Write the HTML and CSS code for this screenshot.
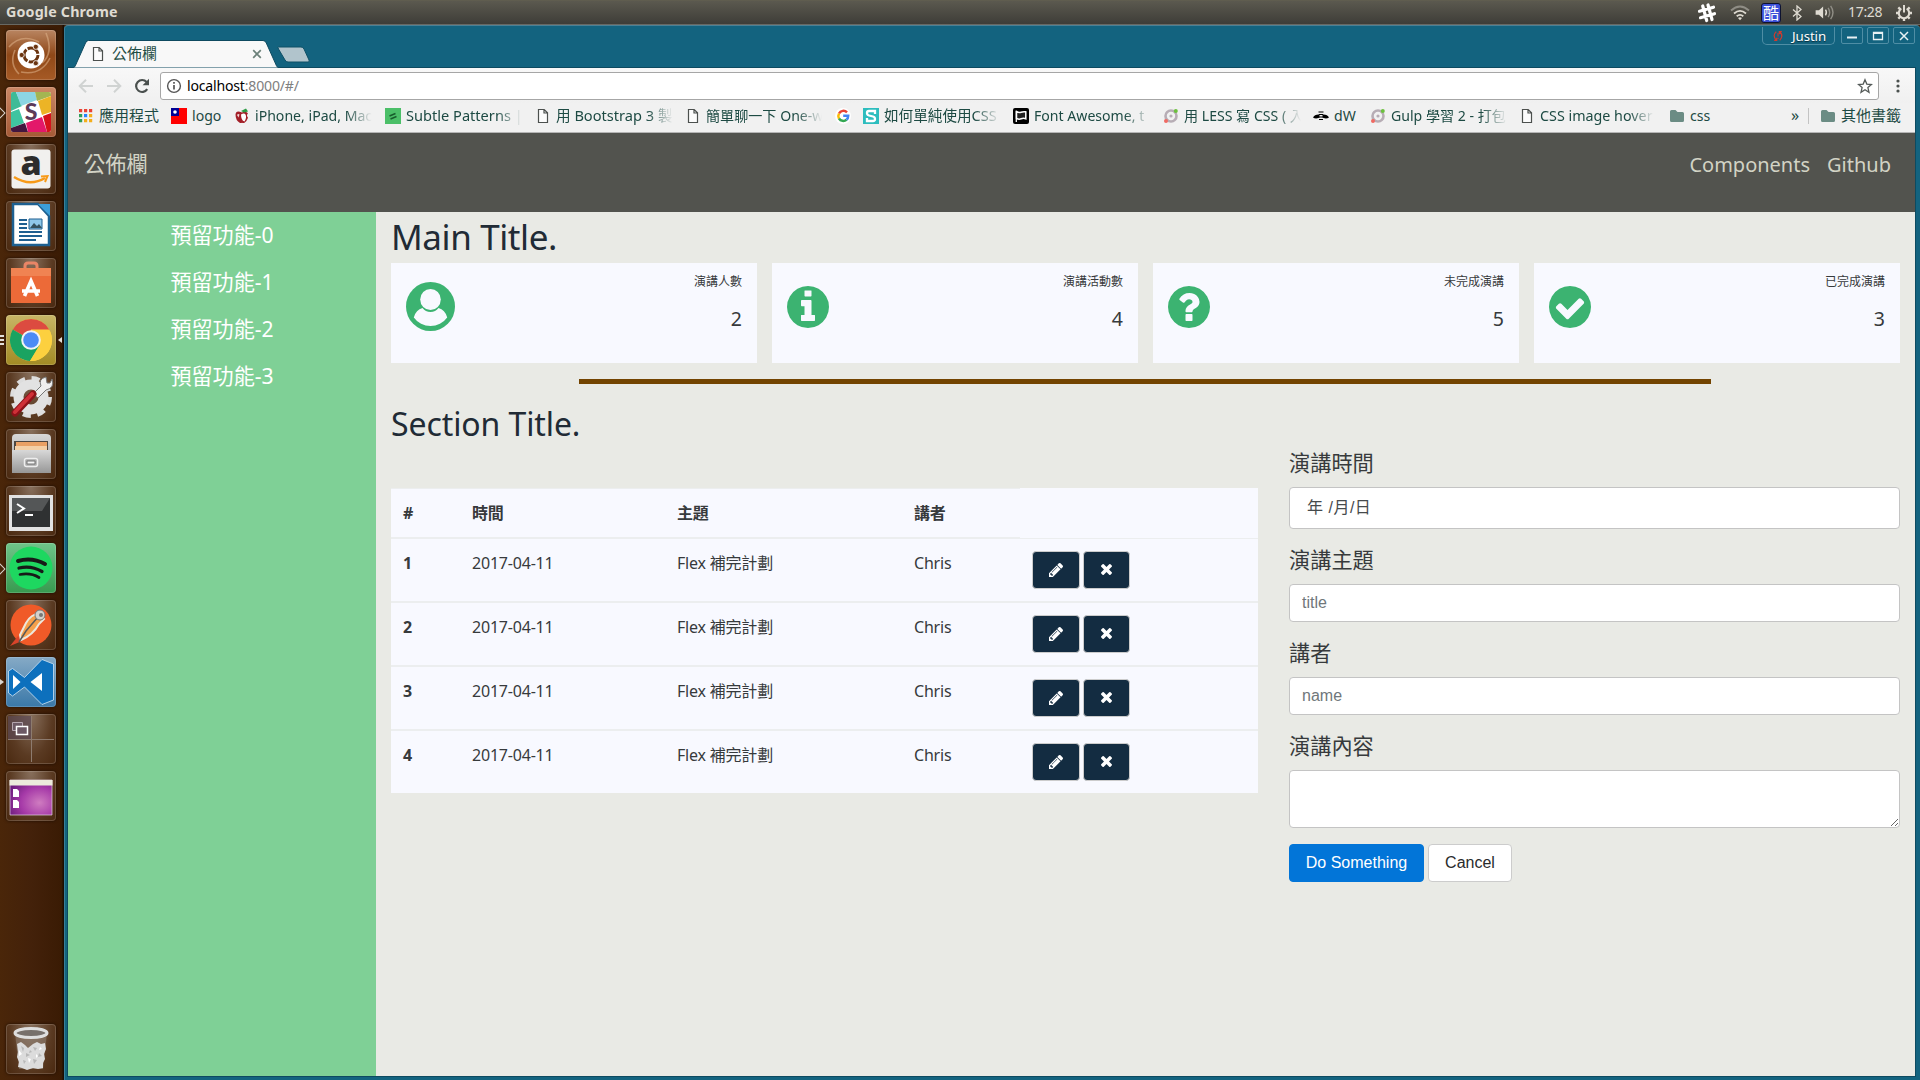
FILE: index.html
```html
<!DOCTYPE html>
<html lang="zh-Hant">
<head>
<meta charset="utf-8">
<title>公佈欄</title>
<link rel="stylesheet" href="styles.css">
</head>
<body>
<svg class="defs" aria-hidden="true">
  <defs>
    <linearGradient id="metal" x1="0" y1="0" x2="0" y2="1"><stop offset="0" stop-color="#d8d8d8"/><stop offset="1" stop-color="#979797"/></linearGradient>
    <radialGradient id="purple" cx=".7" cy=".65" r=".8"><stop offset="0" stop-color="#cf7cc0"/><stop offset=".55" stop-color="#a63aa8"/><stop offset="1" stop-color="#6a1c7c"/></radialGradient>
    <symbol id="page" viewBox="0 0 12 16"><path d="M1.500 1.500h5.700l3.300 3.300v9.700h-9z M7 1.500v3.500h3.500" fill="#fcfcfc" stroke="#4c504e" stroke-width="1.200"/></symbol>
    <symbol id="folder" viewBox="0 0 16 14"><path d="M1 2.500q0-1.500 1.500-1.500h4l2 2h5q1.500 0 1.500 1.500v7q0 1.500-1.500 1.500h-11q-1.500 0-1.500-1.500z" fill="#6b8c84"/></symbol>
    <symbol id="ring" viewBox="0 0 16 16"><circle cx="8" cy="8" r="5.500" fill="none" stroke="#b7adb5" stroke-width="2.600"/><circle cx="8" cy="8" r="1.600" fill="#b7adb5"/><circle cx="12.800" cy="3" r="2" fill="#6cc03e"/><circle cx="3" cy="13" r="2" fill="#ef6a63"/></symbol>
    <symbol id="pencil" viewBox="128 149 1515 1515"><path fill="#fff" d="M491 1536l91-91-235-235-91 91v107h128v128h107zm523-928q0-22-22-22-10 0-17 7l-542 542q-7 7-7 17 0 22 22 22 10 0 17-7l542-542q7-7 7-17zm-54-192l416 416-832 832h-416v-416zm683 96q0 53-37 90l-166 166-416-416 166-165q36-38 90-38 53 0 91 38l235 234q37 39 37 91z"/></symbol>
    <symbol id="times" viewBox="302 366 1188 1188"><path fill="#fff" d="M1490 1322q0 40-28 68l-136 136q-28 28-68 28t-68-28l-294-294-294 294q-28 28-68 28t-68-28l-136-136q-28-28-28-68t28-68l294-294-294-294q-28-28-28-68t28-68l136-136q28-28 68-28t68 28l294 294 294-294q28-28 68-28t68 28l136 136q28 28 28 68t-28 68l-294 294 294 294q28 28 28 68z"/></symbol>
  </defs>
</svg>

<header class="panel">
  <span class="panel-title">Google Chrome</span>
  <div class="tray">
    <svg class="t-slack" viewBox="0 0 20 20"><g stroke="#fff" stroke-width="3.200" stroke-linecap="round"><path d="M5.700 3l4 14.500M11 2l4 14.500M2.500 8.200l14-4M3.500 14.700l14-4"/></g></svg>
    <svg class="t-wifi" viewBox="0 0 20 16"><g fill="none" stroke-width="1.800"><path d="M1 5.500q9-8 18 0" stroke="#8f8d85"/><path d="M4 8.500q6-5.200 12 0M6.700 11.300q3.300-2.800 6.600 0" stroke="#dfdbd2"/></g><path d="M8 13q2-1.500 4 0l-2 2.200z" fill="#dfdbd2"/></svg>
    <span class="t-ime">酷</span>
    <svg class="t-bt" viewBox="0 0 10 16"><path d="M1 4.500l8 7-4 3.500v-14l4 3.500-8 7" fill="none" stroke="#dfdbd2" stroke-width="1.300"/></svg>
    <svg class="t-vol" viewBox="0 0 20 16"><path d="M0 5.500h3.500l4.500-4v13l-4.500-4h-3.500z" fill="#dfdbd2"/><path d="M10.500 5q2 3 0 6" fill="none" stroke="#dfdbd2" stroke-width="1.500"/><path d="M13.300 3q3.400 5 0 10M16 1q5 7 0 14" fill="none" stroke="#908e86" stroke-width="1.500"/></svg>
    <span class="t-clock">17:28</span>
    <svg class="t-gear" viewBox="0 0 18 18"><g stroke="#dfdbd2" stroke-width="2.400"><path d="M1 9h3M14 9h3M9 14v3M3.300 3.300l2.200 2.200M14.700 3.300l-2.200 2.200M3.300 14.700l2.200-2.200M14.700 14.700l-2.200-2.200"/></g><path d="M6.300 4.600a5.200 5.200 0 1 0 5.400 0" fill="none" stroke="#dfdbd2" stroke-width="2.100"/><path d="M9 1v7.500" stroke="#dfdbd2" stroke-width="2"/></svg>
  </div>
</header>

<div class="desktop">
<nav class="launcher">
  <div class="tile dash"><svg viewBox="0 0 50 50"><g fill="none" stroke="#e0b48c" stroke-opacity=".55" stroke-width="1.600"><path d="M3 17q12-14 30-5M40 3q8 20-4 30M13 44q-10-10-4-24M15 42q20 4 29-14"/></g><circle cx="25" cy="25" r="13.500" fill="#fff"/><circle cx="25" cy="25" r="7" fill="none" stroke="#6b3410" stroke-width="3" stroke-dasharray="13.200 1.460"/><g fill="#6b3410" stroke="#fff" stroke-width=".8"><circle cx="15.700" cy="25" r="2.600"/><circle cx="29.800" cy="16.800" r="2.600"/><circle cx="29.800" cy="33.200" r="2.600"/></g></svg></div>
  <div class="tile slack mark-open"><svg viewBox="0 0 50 50"><clipPath id="sc"><rect x="5" y="5" width="40" height="40" rx="2"/></clipPath><g clip-path="url(#sc)"><path fill="#fff" d="M5 5h40v40h-40z"/><path fill="#3ebb97" d="M5 5h5l6 14-11 5z"/><path fill="#8cd5e3" d="M10 5h19l2 8-16 6z"/><path fill="#a3b552" d="M29 5h16v4l-14 5z"/><path fill="#ecb426" d="M32 14l13-5v16l-9 3z"/><path fill="#3fc4a0" d="M5 25l8-3 5 14-13 5z"/><path fill="#43163f" d="M5 41l14-5 3 9h-17z"/><path fill="#e3186a" d="M20 36l16-6 5 15h-19z"/><path fill="#d5121b" d="M37 29l8-3v19h-4z"/></g><text x="25" y="33" class="g-slack">S</text></svg></div>
  <div class="tile"><svg viewBox="0 0 50 50"><rect x="5.500" y="5.500" width="39" height="39" rx="3" fill="#f1f0ee"/><text x="25" y="31" class="g-amz">a</text><path d="M8 33q16 10 31 1" fill="none" stroke="#f79a18" stroke-width="2.500"/><path d="M35 32.500l6.500-.5-2.500 6" fill="none" stroke="#f79a18" stroke-width="2"/></svg></div>
  <div class="tile"><svg viewBox="0 0 50 50"><path d="M7 3h25l11 12v29h-36z" fill="#fff" stroke="#1d6091" stroke-width="2.500"/><path d="M32 3h12v12z" fill="#3c9ed8"/><g stroke="#1f5f90" stroke-width="2"><path d="M13 19h8M13 23h8M13 27h8M13 31h23M13 35h23M13 39h17"/></g><path d="M23 18h13v10h-13z" fill="#8fc8ea" stroke="#1f5f90"/><path d="M24 27l4-5 3 3 2-2 3 4z" fill="#35515d"/></svg></div>
  <div class="tile"><svg viewBox="0 0 50 50"><path d="M19 15v-7q0-3 3-3h6q3 0 3 3v7" fill="none" stroke="#e98566" stroke-width="3"/><path d="M5 10h40v35h-40z" fill="#ec6a38"/><path d="M5 10h40v8h-40z" fill="#f08352"/><path d="M18.500 38l6.500-15 6.500 15M16 33h18" fill="none" stroke="#fff" stroke-width="3.600"/></svg></div>
  <div class="tile chrome mark-many"><svg viewBox="0 0 50 50"><circle cx="25" cy="25" r="21" fill="#fcd03f"/><path d="M25 25L6.800 14.500A21 21 0 0 1 43.200 14.500H25z" fill="#dc4b40"/><path d="M6.800 14.500A21 21 0 0 0 24 46l10-16-9-5z" fill="#1aa361"/><path d="M25 15.500H43.700A21 21 0 0 1 24 46l9.500-16z" fill="#fcd03f"/><circle cx="25" cy="25" r="9.800" fill="#f3f3f3"/><circle cx="25" cy="25" r="7.800" fill="#4c8bf5"/></svg></div>
  <div class="tile"><svg viewBox="0 0 50 50"><circle cx="25" cy="25" r="18.500" fill="none" stroke="#ddd" stroke-width="5" stroke-dasharray="8 6.530"/><circle cx="25" cy="25" r="12.500" fill="none" stroke="#e2e2e2" stroke-width="10"/><path d="M27 22l8-8q-3-7 5-9l1 6 3 0 2-4q3 9-6 11l-8 8z" fill="#eee" stroke="#777"/><path d="M9 41L27 22" stroke="#8d1219" stroke-width="7" stroke-linecap="round"/><path d="M9 40L26 22" stroke="#cf3038" stroke-width="4" stroke-linecap="round"/></svg></div>
  <div class="tile"><svg viewBox="0 0 50 50"><path d="M6 9q0-4 4-4h30q5 0 5 4v35h-39z" fill="url(#metal)"/><path d="M8 12h34v9h-34z" fill="#4d4640"/><path d="M10 13h31v8h-31z" fill="#e9a064"/><path d="M9 17h32v4h-32z" fill="#f3cfa6"/><path d="M6 21h39v23h-39z" fill="url(#metal)"/><rect x="18.500" y="29.500" width="13" height="8" rx="2" fill="#aaa" stroke="#eee" stroke-width="1.500"/><path d="M21 32h8v3h-8z" fill="#f5f5f5" stroke="#777"/></svg></div>
  <div class="tile"><svg viewBox="0 0 50 50"><path d="M3 9h44v36h-44z" fill="#e2e2e2"/><path d="M6 12h38v29h-38z" fill="#2f3132"/><path d="M6 12h38l-8 13h-30z" fill="#545657"/><path d="M11 18l7 4.500-7 4.500M19 29h8" fill="none" stroke="#fff" stroke-width="2"/></svg></div>
  <div class="tile spotify mark-open"><svg viewBox="0 0 50 50"><circle cx="25" cy="25" r="21.500" fill="#1ed760"/><g fill="none" stroke="#171a18" stroke-linecap="round"><path d="M12 18q14-4 27 3" stroke-width="4"/><path d="M13 25q12-3 23 3.500" stroke-width="3.300"/><path d="M14 31.500q11-2 19 3" stroke-width="2.700"/></g></svg></div>
  <div class="tile"><svg viewBox="0 0 50 50"><circle cx="25" cy="25" r="20.500" fill="#f05a28"/><path d="M4 46l8-10 4 5z" fill="#d9442a"/><path d="M33 14q-8 0-13 9l-6 12 1 5q12-5 18-16l5-5z" fill="#f5a04b" stroke="#ece7dc" stroke-width="2"/><path d="M32 17l-12 14-7 11" stroke="#5a5a5a" stroke-width="1.500" fill="none"/><circle cx="34" cy="15" r="5" fill="#d4d0cb" stroke="#777"/><circle cx="35" cy="15" r="2" fill="#777"/></svg></div>
  <div class="tile code mark-solid"><svg viewBox="0 0 50 50"><path d="M2.500 14l4-2.500 12 9L36 2.500l11.500 4.500v36L36 47.500 18.500 30l-12 9-4-3z" fill="#0d70bd" stroke="#cfe5f5" stroke-width=".8"/><path d="M7 18l7.500 7-7.500 7zM36 16v18L24.500 25z" fill="#fff"/></svg></div>
  <div class="tile"><svg viewBox="0 0 50 50"><path d="M2 2h23v23h-23z" fill="#5d4a55" fill-opacity=".7"/><path d="M25.500 2v46M2 25.500h46" stroke="#8d7b6f" stroke-width="1"/><path d="M6.500 8.500h10v8h-10z" fill="#6c5965" stroke="#b5a6af"/><path d="M10.500 12.500h11v8h-11z" fill="#6c5965" stroke="#fff" stroke-width="1.500"/></svg></div>
  <div class="tile"><svg viewBox="0 0 50 50"><path d="M4 9h42v35h-42z" fill="url(#purple)" stroke="#e5d3e4" stroke-width=".7"/><path d="M3.500 9h43v5.500h-43z" fill="#ecebdc"/><path d="M7 18h4l2 2v6h-6zM7 29h4l2 2v6h-6z" fill="#fff"/></svg></div>
  <div class="tile trash"><svg viewBox="0 0 50 50"><path d="M9 9h32l-4 36h-24z" fill="#9b9188" fill-opacity=".45"/><path d="M11 20l4-2 4 3 3 3 5-4 4-2 4 2 4-1 1 6-2 5 1 5-2 4v5l-5 1-5-1-6 2-5-2-4-1 1-5-2-5 1-5z" fill="#dcdcdc"/><path d="M15 22l3 2-1 4zM27 23l4 1-2 3zM20 29l4 2-4 2zM33 29l3 3-4 1zM17 36l3 1-2 3zM27 35l4 1-3 4zM24 26l2 2-3 1z" fill="#b8b8b8"/><path d="M13 26l3 4-3 2zM22 34l3 1-2 4zM30 30l2 2-2 2zM34 23l2 2-3 1z" fill="#fff"/><ellipse cx="25" cy="9" rx="16" ry="4.500" fill="#77706b" stroke="#dedede" stroke-width="3"/></svg></div>
</nav>

<main class="window">
  <div class="frame-top">
    <svg class="tab-shape" viewBox="0 0 245 28"><path d="M0 28q1.500-.5 2.300-2.200L12.500 3q1-2.500 3-2.500H190q2.300 0 3.300 2.500l10.200 22.800q.8 1.700 2.500 2.200z" fill="#f8f8f8" stroke="#0e4a60"/><path d="M205.500 7h22.500q2 0 3 2l5 11q1 2-1 2h-20q-2 0-3-2l-6.500-11q-1-2 0-2z" fill="#b1c4cc" stroke="#0f5066"/></svg>
    <div class="tab"><svg class="i-page"><use href="#page"/></svg><span class="tab-title">公佈欄</span><svg class="tab-close" viewBox="0 0 10 10"><path d="M1.200 1.200l7.600 7.600M8.800 1.200l-7.600 7.600" stroke="#6b8079" stroke-width="1.700"/></svg></div>
    <div class="win-ctl">
      <div class="user"><svg viewBox="0 0 14 14"><path d="M5 2q-5 4 0 10M2.500 12h3v-3M9 2q5 5 0 10M11.500 2h-3v3" fill="none" stroke="#d23a2e" stroke-width="1.400"/><path d="M7 3.500v4M7 9v1.500" stroke="#d23a2e" stroke-width="1.200"/></svg><span>Justin</span></div>
      <div class="wb"><svg viewBox="0 0 12 12"><path d="M1 7.500h10" stroke="#e8f1f4" stroke-width="2"/></svg></div>
      <div class="wb"><svg viewBox="0 0 12 12"><path d="M1.500 2.500h9v7h-9z" fill="none" stroke="#e8f1f4" stroke-width="1.300"/><path d="M1 3h10" stroke="#e8f1f4" stroke-width="2"/></svg></div>
      <div class="wb"><svg viewBox="0 0 12 12"><path d="M2 2l8 8M10 2l-8 8" stroke="#e8f1f4" stroke-width="1.500"/></svg></div>
    </div>
  </div>
  <div class="client">
  <div class="toolbar">
    <svg class="nav-i" viewBox="0 0 16 16"><path d="M15 8h-13M8 1.700l-6.300 6.300 6.300 6.300" fill="none" stroke="#d0d3d2" stroke-width="2"/></svg>
    <svg class="nav-i" viewBox="0 0 16 16"><path d="M1 8h13M8 1.700l6.300 6.300-6.300 6.300" fill="none" stroke="#d0d3d2" stroke-width="2"/></svg>
    <svg class="nav-i" viewBox="0 0 16 16"><path d="M13.200 11.200a6 6 0 1 1-.6-7.200" fill="none" stroke="#4a504e" stroke-width="2.200"/><path d="M15 .8v6.400h-6.400z" fill="#4a504e"/></svg>
    <div class="omnibox">
      <svg class="i-info" viewBox="0 0 16 16"><circle cx="8" cy="8" r="6.400" fill="none" stroke="#555" stroke-width="1.400"/><path d="M8 7v4.500M8 4v1.800" stroke="#555" stroke-width="1.700"/></svg>
      <span class="url"><b>localhost</b>:8000/#/</span>
      <svg class="i-star" viewBox="0 0 16 16"><path d="M8 1.700l1.800 4.400 4.700.4-3.600 3.100 1.100 4.700-4-2.500-4 2.500 1.100-4.700-3.600-3.100 4.700-.4z" fill="none" stroke="#555b59" stroke-width="1.300"/></svg>
    </div>
    <svg class="i-dots" viewBox="0 0 4 14"><g fill="#4a504e"><circle cx="2" cy="2" r="1.600"/><circle cx="2" cy="7" r="1.600"/><circle cx="2" cy="12" r="1.600"/></g></svg>
  </div>
  <div class="bookmarks">
    <div class="bm b1"><svg viewBox="0 0 16 16"><path fill="#ea4335" d="M1 1h3.200v3.200h-3.200zM6 1h3.200v3.200h-3.200zM11 1h3.200v3.200h-3.200z"/><path fill="#2f9e58" d="M1 6h3.200v3.200h-3.200zM1 11h3.200v3.200h-3.200z"/><path fill="#2684fc" d="M6 6h3.200v3.200h-3.200z"/><path fill="#f4ae1a" d="M11 6h3.200v3.200h-3.200zM11 11h3.200v3.200h-3.200zM6 11h3.200v3.200h-3.200z"/></svg><span>應用程式</span></div>
    <div class="bm b2"><svg viewBox="0 0 16 16"><path fill="#f00" d="M0 0h16v16h-16z"/><path fill="#000095" d="M0 0h8v8h-8z"/><circle cx="4" cy="4" r="1.800" fill="#fff"/></svg><span>logo</span></div>
    <div class="bm b3"><svg viewBox="0 0 16 16"><path d="M8 4.500q-6-3-6.500 2 0 6 4.500 8.500 1 .3 2-.3 1.500.6 2.500 0 2.500-2 3.500-5-2-2.500 0-4.500-3-2.500-6-.7z" fill="#a31f28"/><path d="M7 6.500q3-2 4.500 0 1.500 3-1 7-3.500-1-3.500-7z" fill="#fff"/><path d="M3 7q1-1.500 2.500-.5l-1 3z" fill="#f3d6d6"/><path d="M7 3l5-2.500 2 3-4 1z" fill="#2d9b45"/></svg><span class="fade">iPhone, iPad, Mac</span></div>
    <div class="bm b4"><svg viewBox="0 0 16 16"><path fill="#4bbf68" d="M0 0h16v16h-16z"/><path d="M4.500 8l6-2.500M5.500 11l6-2.500" stroke="#175c2c" stroke-width="1.500"/></svg><span class="fade">Subtle Patterns |</span></div>
    <div class="bm b5"><svg class="doc"><use href="#page"/></svg><span class="fade">用 Bootstrap 3 製</span></div>
    <div class="bm b6"><svg class="doc"><use href="#page"/></svg><span class="fade">簡單聊一下 One-w</span></div>
    <div class="bm b7"><svg viewBox="0 0 16 16"><circle cx="8" cy="8" r="8" fill="#fff"/><g fill="none" stroke-width="2.500"><path d="M12 4.300a5 5 0 0 0-8 1.200" stroke="#ea4335"/><path d="M4 5.500a5 5 0 0 0 0 5" stroke="#fbbc05"/><path d="M4 10.500a5 5 0 0 0 7.500 1.200" stroke="#34a853"/><path d="M11.500 11.700q1.700-1.500 1.700-4h-5" stroke="#4285f4"/></g></svg></div>
    <div class="bm b8"><svg viewBox="0 0 16 16"><path fill="#2dbdbe" d="M0 0h16v16h-16z"/><path d="M12 6v-3h-6q-2 0-2 2t2 2.500l4 1q2 .5 2 2.500t-2 2h-6v-3" fill="none" stroke="#fff" stroke-width="2.300"/></svg><span class="fade">如何單純使用CSS</span></div>
    <div class="bm b9"><svg viewBox="0 0 16 16"><rect width="16" height="16" rx="2"/><path d="M3.500 3.500q2.500 1.500 4.500.7t4.800-.4v7q-2.300-1-4.600 0t-4.700-.4z" fill="#222" stroke="#fff" stroke-width="1.500"/><path d="M3.300 3v11" stroke="#fff" stroke-width="1.300"/></svg><span class="fade">Font Awesome, t</span></div>
    <div class="bm b10"><svg><use href="#ring"/></svg><span class="fade">用 LESS 寫 CSS ( 入</span></div>
    <div class="bm b11"><svg viewBox="0 0 16 16"><path d="M0 9.500q1.500-3 5.500-3l1-.5v3.500l-1 .5q-3 1.200-5.500-.5zM16 9.500q-1.500-3-5.500-3l-1-.5v3.500l1 .5q3 1.200 5.500-.5z"/><path d="M5.500 4h5M6 6.500h4M6 9h4M6 11.500h4" stroke="#000" stroke-width="1.200"/></svg><span>dW</span></div>
    <div class="bm b12"><svg><use href="#ring"/></svg><span class="fade">Gulp 學習 2 - 打包</span></div>
    <div class="bm b13"><svg class="doc"><use href="#page"/></svg><span class="fade">CSS image hover</span></div>
    <div class="bm b14"><svg><use href="#folder"/></svg><span>css</span></div>
    <div class="bm b15"><span>»</span></div>
    <div class="bm b16"><svg><use href="#folder"/></svg><span>其他書籤</span></div>
  </div>

  <div class="app-head"><a class="brand">公佈欄</a><nav><a>Components</a><a>Github</a></nav></div>
  <div class="app">
    <aside class="side"><a>預留功能-0</a><a>預留功能-1</a><a>預留功能-2</a><a>預留功能-3</a></aside>
    <section class="content">
      <h1>Main Title.</h1>
      <div class="cards">
        <div class="card"><svg class="big" viewBox="0 0 49 49"><circle cx="24.500" cy="24.500" r="24.500" fill="#3cb371"/><path d="M16.500 26q-6.500 1.500-8.700 9.500a20.500 20.500 0 0 0 33.400 0q-2.200-8-8.700-9.500-3 4-8 4t-8-4z" fill="#f8f9ff"/><ellipse cx="24.500" cy="17.500" rx="10.300" ry="10.500" fill="#f8f9ff"/></svg><div><h6>演講人數</h6><p>2</p></div></div>
        <div class="card"><svg viewBox="128 128 1536 1536"><path fill="#3cb371" d="M1152 1376v-160q0-14-9-23t-23-9h-96v-512q0-14-9-23t-23-9h-320q-14 0-23 9t-9 23v160q0 14 9 23t23 9h96v320h-96q-14 0-23 9t-9 23v160q0 14 9 23t23 9h448q14 0 23-9t9-23zm-128-896v-160q0-14-9-23t-23-9h-192q-14 0-23 9t-9 23v160q0 14 9 23t23 9h192q14 0 23-9t9-23zm640 416q0 209-103 385.500t-279.500 279.500-385.500 103-385.500-103-279.500-279.500-103-385.500 103-385.500 279.500-279.500 385.500-103 385.500 103 279.500 279.500 103 385.500z"/></svg><div><h6>演講活動數</h6><p>4</p></div></div>
        <div class="card"><svg viewBox="128 128 1536 1536"><path fill="#3cb371" d="M1024 1376v-192q0-14-9-23t-23-9h-192q-14 0-23 9t-9 23v192q0 14 9 23t23 9h192q14 0 23-9t9-23zm256-672q0-88-55.500-163t-138.500-116-170-41q-243 0-371 213-15 24 8 42l132 100q7 6 19 6 16 0 25-12 53-68 86-92 34-24 86-24 48 0 85.500 26t37.500 59q0 38-20 61t-68 45q-63 28-115.500 86.500t-52.500 125.500v36q0 14 9 23t23 9h192q14 0 23-9t9-23q0-19 21.500-49.500t54.500-49.500q32-18 49-28.500t46-35 44.500-48 28-60.500 12.500-81zm384 192q0 209-103 385.500t-279.500 279.500-385.500 103-385.500-103-279.500-279.500-103-385.500 103-385.500 279.500-279.500 385.500-103 385.500 103 279.500 279.500 103 385.500z"/></svg><div><h6>未完成演講</h6><p>5</p></div></div>
        <div class="card"><svg viewBox="128 128 1536 1536"><path fill="#3cb371" d="M1412 734q0-28-18-46l-91-90q-19-19-45-19t-45 19l-408 407-226-226q-19-19-45-19t-45 19l-91 90q-18 18-18 46 0 27 18 45l362 362q19 19 45 19 27 0 46-19l543-543q18-18 18-45zm252 162q0 209-103 385.500t-279.500 279.500-385.500 103-385.500-103-279.500-279.500-103-385.500 103-385.500 279.500-279.500 385.500-103 385.500 103 279.500 279.500 103 385.500z"/></svg><div><h6>已完成演講</h6><p>3</p></div></div>
      </div>
      <hr>
      <h2>Section Title.</h2>
      <div class="cols">
        <table>
          <colgroup><col class="c1"><col class="c2"><col class="c3"><col class="c4"><col class="c5"></colgroup>
          <thead><tr><th>#</th><th>時間</th><th>主題</th><th>講者</th><td></td></tr></thead>
          <tbody>
            <tr><th>1</th><td>2017-04-11</td><td>Flex 補完計劃</td><td>Chris</td><td><div class="acts"><button><svg class="ip"><use href="#pencil"/></svg></button><button><svg class="ix"><use href="#times"/></svg></button></div></td></tr>
            <tr><th>2</th><td>2017-04-11</td><td>Flex 補完計劃</td><td>Chris</td><td><div class="acts"><button><svg class="ip"><use href="#pencil"/></svg></button><button><svg class="ix"><use href="#times"/></svg></button></div></td></tr>
            <tr><th>3</th><td>2017-04-11</td><td>Flex 補完計劃</td><td>Chris</td><td><div class="acts"><button><svg class="ip"><use href="#pencil"/></svg></button><button><svg class="ix"><use href="#times"/></svg></button></div></td></tr>
            <tr><th>4</th><td>2017-04-11</td><td>Flex 補完計劃</td><td>Chris</td><td><div class="acts"><button><svg class="ip"><use href="#pencil"/></svg></button><button><svg class="ix"><use href="#times"/></svg></button></div></td></tr>
          </tbody>
        </table>
        <form>
          <label>演講時間</label><div class="field date">年 /月/日</div>
          <label>演講主題</label><input class="field" placeholder="title">
          <label>講者</label><input class="field" placeholder="name">
          <label>演講內容</label><textarea class="field"></textarea>
          <div class="btns"><button type="button" class="go">Do Something</button><button type="button" class="cancel">Cancel</button></div>
        </form>
      </div>
    </section>
  </div>
  </div>
</main>
</div>
</body>
</html>
```
FILE: styles.css
```css
* { box-sizing: border-box; }
html, body { margin: 0; height: 1080px; overflow: hidden; }
body {
  display: flex; flex-direction: column; width: 1920px;
  font-family: "Noto Sans", "Noto Sans CJK TC", sans-serif;
  background: #411f05; color: #373a3c;
}
svg { display: block; flex: none; }
.defs { position: absolute; width: 0; height: 0; }

/* desktop panel */
.panel {
  height: 25px; flex: none; display: flex; align-items: center; justify-content: space-between;
  padding: 0 7px 0 6px; background: linear-gradient(#64614f 0, #5b594f 1px, #3e3d38 24px, #686863 24px);
  color: #dfdbd2; font-size: 15px;
}
.panel-title { font-weight: 700; font-size: 14.300px; line-height: 22px; letter-spacing: .15px; height: 24px; }
.tray { display: flex; align-items: center; height: 24px; }
.t-slack { width: 20px; height: 20px; margin-right: 13px; }
.t-wifi { width: 20px; height: 16px; margin-right: 11px; }
.t-ime { width: 20px; height: 20px; margin-right: 11px; background: #3b50d8; border: 1px solid #0d1230; border-radius: 3px; color: #fff; font-size: 16px; line-height: 16px; text-align: center; font-family: "Noto Sans CJK TC", sans-serif; }
.t-bt { width: 10px; height: 16px; margin-right: 13px; }
.t-vol { width: 20px; height: 15px; margin-right: 13px; }
.t-clock { font-size: 14px; line-height: 22px; height: 24px; width: 36px; letter-spacing: -.3px; margin-right: 11px; }
.t-gear { width: 18px; height: 18px; }

.desktop { flex: 1; display: flex; min-height: 0; }

/* launcher */
.launcher { width: 64px; flex: none; display: flex; flex-direction: column; gap: 7px; padding: 5px 0 6px 6px; background: linear-gradient(90deg, #4a2609, #43210a 50%, #3a1b04 96%, #120a03); }
.tile { position: relative; width: 50px; height: 50px; border-radius: 4px; background: radial-gradient(ellipse at 50% 0, #88705d, #5a3a22 60%, #49280f); box-shadow: inset 0 0 0 1px rgba(255,255,255,.16), 0 0 3px #1d0d02; }
.tile svg { width: 50px; height: 50px; }
.dash { background: linear-gradient(#b98561, #8f4818 50%, #a65a25); }
.slack { background: linear-gradient(#cb8765, #a55a36); }
.chrome { background: linear-gradient(#c8b566, #a38b24); }
.spotify { background: linear-gradient(#6fc489, #38994f); }
.code { background: linear-gradient(#86aac6, #3a78a8); }
.trash { margin-top: auto; }
.g-slack { font: 900 23px "Lato", sans-serif; fill: #5c3a58; text-anchor: middle; }
.g-amz { font: 800 34px "Open Sans", sans-serif; fill: #2c2c2c; text-anchor: middle; }
.mark-open::before { content: ""; position: absolute; left: -10px; top: 22px; width: 6px; height: 6px; border: 1px solid #d9d4cf; transform: rotate(45deg); }
.mark-solid::before { content: ""; position: absolute; left: -6px; top: 22px; border: 3px solid transparent; border-left: 4px solid #d9d4cf; }
.mark-many::before { content: ""; position: absolute; left: -6px; top: 20px; width: 4px; height: 10px; background: repeating-linear-gradient(#e5e1dc 0 2px, transparent 2px 4px); }
.mark-many::after { content: ""; position: absolute; left: 52px; top: 22px; border: 3px solid transparent; border-right: 4px solid #e5e1dc; border-left: 0; }

/* browser window */
.window { flex: 1; min-width: 0; display: flex; flex-direction: column; padding: 0 5px 4px 3px; background: #13637f; border-top: 1px solid #4b8196; border-left: 1px solid #3a7f99; border-radius: 4px 4px 0 0; }
.frame-top { height: 42px; flex: none; position: relative; display: flex; justify-content: space-between; }
.tab-shape { position: absolute; left: 5px; top: 14px; width: 245px; height: 28px; z-index: 0; }
.tab { position: relative; display: flex; align-items: center; height: 28px; margin-top: 14px; padding-left: 24px; width: 210px; }
.i-page { width: 12px; height: 16px; }
.tab-title { font-size: 15px; line-height: 24px; padding-bottom: 3px; color: #1f4d45; margin-left: 8px; width: 140px; }
.tab-close { width: 10px; height: 10px; }
.win-ctl { display: flex; gap: 4px; padding-top: 1px; }
.user { display: flex; align-items: center; gap: 7px; width: 73px; height: 18px; margin-right: 2px; padding-left: 8px; border: 1px solid #4f8ea5; border-top: 0; border-radius: 0 0 5px 5px; color: #fff; font-size: 13.300px; letter-spacing: -.1px; text-shadow: 0 1px 1px #062c3a; }
.user svg { width: 14px; height: 12px; }
.wb { width: 22px; height: 17px; border: 1px solid #4f8ea5; border-radius: 2px; display: flex; align-items: center; justify-content: center; }
.wb svg { width: 12px; height: 12px; }

.client { flex: 1; min-height: 0; display: flex; flex-direction: column; background: #f1f1f1; box-shadow: 0 0 0 1px #0d4a60; }
.toolbar { height: 35px; flex: none; display: flex; align-items: center; padding: 1px 15px 0 10px; background: linear-gradient(#f8f8f8, #f0f0f0); }
.nav-i { width: 16px; height: 16px; margin-right: 12px; }
.omnibox { flex: 1; height: 28px; margin: 0 17px 0 -2px; display: flex; align-items: center; padding: 0 5px; background: #fff; border: 1px solid #a6a6a6; border-radius: 3px; }
.i-info { width: 16px; height: 16px; }
.url { flex: 1; margin-left: 5px; padding-bottom: 2px; font-size: 14.100px; letter-spacing: -.2px; color: #808080; }
.url b { font-weight: 400; color: #000; }
.i-star { width: 16px; height: 16px; }
.i-dots { width: 4px; height: 14px; }

.bookmarks { height: 30px; flex: none; display: flex; align-items: center; padding: 0 0 3px 10px; border-bottom: 1px solid #b5b5b5; background: #f1f1f1; color: #1d4a43; font-size: 14.100px; }
.bm { flex: none; display: flex; align-items: center; gap: 5px; height: 24px; white-space: nowrap; }
.bm svg { width: 16px; height: 16px; }
.bm .doc { margin-left: -1px; }
.bm span { line-height: 23px; height: 24px; flex: 1; min-width: 0; }
.bm .fade { overflow: hidden; -webkit-mask-image: linear-gradient(90deg, #000 78%, transparent); mask-image: linear-gradient(90deg, #000 78%, transparent); }
.b1 { width: 80px; margin-right: 13px; font-size: 15px; }
.b2 { width: 53px; margin-right: 10px; }
.b3 { width: 138px; margin-right: 13px; }
.b4 { width: 137px; margin-right: 14px; font-size: 14.600px; }
.b5 { width: 137px; margin-right: 13px; font-size: 14.600px; }
.b6 { width: 136px; margin-right: 13px; }
.b7 { width: 16px; margin-right: 12px; }
.b8 { width: 137px; margin-right: 13px; font-size: 14.600px; }
.b9 { width: 137px; margin-right: 13px; }
.b10 { width: 138px; margin-right: 12px; }
.b11 { width: 46px; margin-right: 11px; }
.b12 { width: 137px; margin-right: 13px; }
.b13 { width: 134px; margin-right: 15px; font-size: 14.300px; }
.b14 { width: 50px; margin-right: 72px; }
.b15 { width: 18px; border-right: 1px solid #c3c3c3; height: 16px; margin-right: 11px; font-size: 16px; }
.b15 span { line-height: 14px; height: 16px; }
.b16 { width: 84px; font-size: 15px; }

/* web page */
.app-head { height: 79px; flex: none; display: flex; justify-content: space-between; padding: 16px 24px 0 16px; background: #52534e; color: #d2d3c5; font-size: 20px; line-height: 31px; }
.brand { font-size: 21.300px; line-height: 29px; }
.app-head nav { display: flex; gap: 17px; }
.app { flex: 1; min-height: 0; display: flex; }
.side { width: 308px; flex: none; background: #7fd096; display: flex; flex-direction: column; color: #fff; font-size: 21.100px; text-align: center; }
.side a { height: 47px; line-height: 45px; }
.content { flex: 1; min-width: 0; padding: 0 15px; background: #e9eae5; display: flex; flex-direction: column; }
h1, h2, h6, p { margin: 0; font-weight: 400; }
h1, h2 { color: #212b35; }
h1 { height: 51px; line-height: 49px; font-size: 35px; letter-spacing: -.4px; }
.cards { display: grid; grid-template-columns: repeat(4, 1fr); gap: 15px; }
.card { height: 100px; background: #f8f9ff; display: flex; align-items: center; justify-content: space-between; padding: 0 15px 13px 15px; }
.card svg { width: 42px; height: 42px; }
.card .big { width: 49px; height: 49px; }
.card > div { text-align: right; align-self: flex-start; padding-top: 9px; }
.card h6 { font-size: 12px; line-height: 19px; }
.card p { font-size: 19.500px; line-height: 28px; margin-top: 14px; }
hr { width: 1132px; height: 5px; margin: 16px auto 0 188px; border: 0; background: #734400; flex: none; }
h2 { height: 47px; line-height: 46px; margin-top: 17px; font-size: 32px; letter-spacing: -.1px; }
.cols { display: flex; justify-content: space-between; }
table { width: 867px; height: 305px; margin-top: 40px; table-layout: fixed; border-spacing: 0; background: #f8f9ff; font-size: 16px; letter-spacing: -.2px; }
.c1 { width: 69px; } .c2 { width: 205px; } .c3 { width: 237px; } .c4 { width: 118px; } .c5 { width: 238px; }
th, td { padding: 0 12px; text-align: left; vertical-align: top; }
thead th { height: 51px; border-top: 1px solid #eceeef; border-bottom: 2px solid #eceeef; line-height: 48px; }
thead td { border-bottom: 1px solid #eceeef; }
tbody th, tbody td { height: 64px; border-bottom: 2px solid #eceeef; line-height: 24px; padding-top: 12px; }
tbody tr:last-child > * { height: 62px; border-bottom: 0; }
.acts { display: flex; gap: 3px; }
.acts button { width: 48px; height: 38px; padding: 0 1px 1px 0; display: flex; align-items: center; justify-content: center; background: #132c41; border: 1px solid #ccc; border-radius: 4px; }
.acts button + button { width: 47px; padding-right: 0; }
.ip { width: 14px; height: 14px; }
.ix { width: 11px; height: 11px; }

form { width: 611px; display: flex; flex-direction: column; }
label { height: 31px; line-height: 29px; margin-bottom: 8px; font-size: 21.200px; }
.field { width: 100%; height: 38px; margin: 0 0 16px; padding: 0 12px; border: 1px solid #c4c4c4; border-radius: 4px; background: #fff; font: 16px "Liberation Sans", "Noto Sans CJK TC", sans-serif; color: #464a4c; resize: vertical; outline: 0; }
.field::placeholder { color: #70777b; opacity: 1; }
.date { height: 42px; line-height: 39px; padding-left: 17px; letter-spacing: .5px; }
textarea.field { height: 58px; }
.btns { display: flex; gap: 4px; }
.btns button { height: 38px; border-radius: 4px; font: 16px "Liberation Sans", sans-serif; padding: 0; }
.go { width: 135px; background: #0275d8; border: 1px solid #0275d8; color: #fff; }
.cancel { width: 84px; background: #fff; border: 1px solid #ccc; color: #292b2c; }
```
